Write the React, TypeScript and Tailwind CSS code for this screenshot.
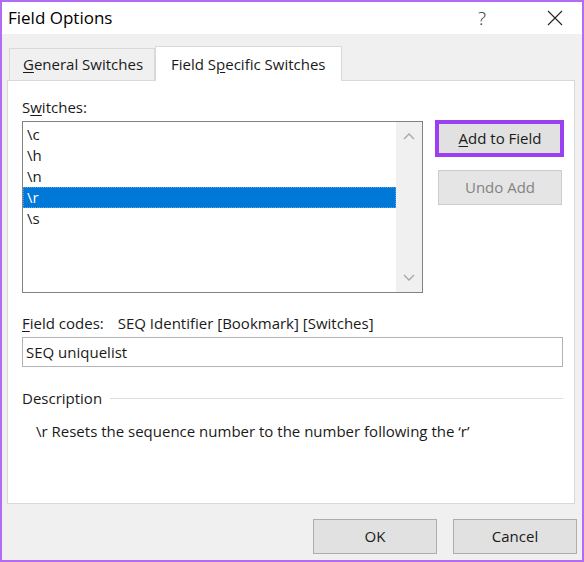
import React from "react"

const switches = ["\\c", "\\h", "\\n", "\\r", "\\s"]

function Chevron({ up }: { up?: boolean }) {
  return (
    <svg width="12" height="8" viewBox="0 0 12 8" fill="none" stroke="#a6a6a6" strokeWidth="1.3">
      {up ? <polyline points="1,7 6,2 11,7" /> : <polyline points="1,1 6,6 11,1" />}
    </svg>
  )
}

export default function App() {
  return (
    <div
      className="w-[584px] h-[562px] border-2 border-[#b36bf3] bg-[#f0f0f0] flex flex-col text-[15px] text-[#1a1a1a]"
      style={{ fontFamily: '"Open Sans", "Noto Sans", sans-serif' }}
    >
      {/* title bar */}
      <div className="h-[32px] shrink-0 bg-white flex items-center pl-[6px]">
        <span className="text-[17px] text-black">Field Options</span>
        <span className="ml-auto mr-[61px] text-[19px] font-light text-[#333]">?</span>
        <svg width="16" height="16" viewBox="0 0 16 16" className="mr-[19px]" stroke="#222" strokeWidth="1.1">
          <line x1="1" y1="1" x2="15" y2="15" />
          <line x1="15" y1="1" x2="1" y2="15" />
        </svg>
      </div>

      <div className="pt-[12px] pl-[5px] pr-[7px]">
        {/* tabs */}
        <div className="flex items-end h-[34px]">
          <div className="ml-[2px] w-[146px] h-[32px] border border-b-0 border-[#d9d9d9] bg-[#f0f0f0] flex items-center pl-[13px]">
            <span>
              <span className="underline underline-offset-2">G</span>eneral Switches
            </span>
          </div>
          <div className="w-[187px] h-[35px] -mb-px relative bg-white border border-b-0 border-[#d9d9d9] flex items-center pl-[15px]">
            <span>
              Field S<span className="underline underline-offset-2">p</span>ecific Switches
            </span>
          </div>
        </div>

        {/* panel */}
        <div className="h-[424px] bg-white border border-[#d9d9d9] pl-[14px] pr-[11px] pt-[16px]">
          <div className="leading-[20px]">
            S<span className="underline underline-offset-2">w</span>itches:
          </div>
          <div className="flex mt-[4px]">
            <div className="w-[401px] h-[172px] border border-[#828282] flex">
              <div className="flex-1 pt-[2px]">
                {switches.map((s) => (
                  <div
                    key={s}
                    className={
                      s === "\\r"
                        ? "h-[21px] leading-[19px] pl-[3px] bg-[#0078d7] text-white border border-dotted border-[#5aa2e6]"
                        : "h-[21px] leading-[21px] pl-[4px]"
                    }
                  >
                    {s}
                  </div>
                ))}
              </div>
              <div className="w-[26px] bg-[#f0f0f0] flex flex-col items-center justify-between py-[10px]">
                <Chevron up />
                <Chevron />
              </div>
            </div>

            <div className="ml-[15px] flex flex-col">
              <button className="relative w-[124px] h-[35px] bg-[#e1e1e1] border border-[#0078d7] text-[#1a1a1a]">
                <span className="underline underline-offset-2">A</span>dd to Field
                <span className="absolute -left-[4px] -top-[2px] w-[129px] h-[37px] border-[4px] border-[#9b3ff0]" />
              </button>
              <button className="mt-[14px] w-[124px] h-[35px] bg-[#e5e5e5] border border-[#cccccc] text-[#838383]">
                Undo Add
              </button>
            </div>
          </div>

          <div className="mt-[20px] leading-[20px] flex">
            <span>
              <span className="underline underline-offset-2">F</span>ield codes:
            </span>
            <span className="ml-[14px]">SEQ Identifier [Bookmark] [Switches]</span>
          </div>
          <div className="mt-[4px] h-[30px] border border-[#b4b4b4] flex items-center pl-[3px]">SEQ uniquelist</div>

          <div className="mt-[21px] flex items-center leading-[20px]">
            <span>Description</span>
            <div className="flex-1 ml-[8px] h-px bg-[#dcdcdc]" />
          </div>
          <div className="mt-[13px] pl-[14px] leading-[20px]">
            \r Resets the sequence number to the number following the ‘r’
          </div>
        </div>
      </div>

      {/* footer */}
      <div className="flex justify-end gap-[16px] pr-[5px] mt-[15px]">
        <button className="w-[124px] h-[35px] bg-[#e1e1e1] border border-[#adadad] text-[#1a1a1a]">OK</button>
        <button className="w-[124px] h-[35px] bg-[#e1e1e1] border border-[#adadad] text-[#1a1a1a]">Cancel</button>
      </div>
    </div>
  )
}
